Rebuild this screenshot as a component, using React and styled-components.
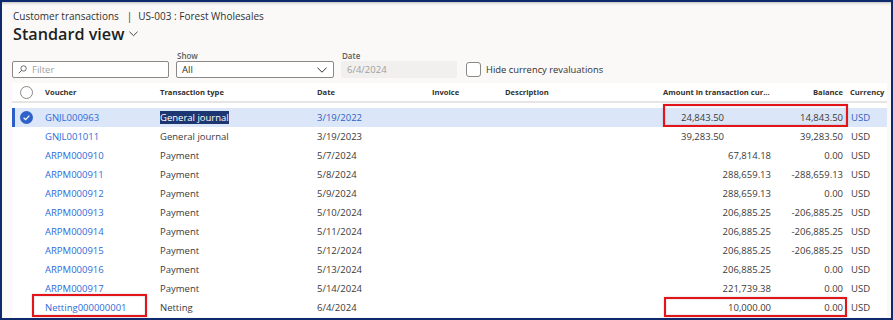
import React from 'react'
import styled, { createGlobalStyle } from 'styled-components'

const GlobalStyle = createGlobalStyle`
  body {
    margin: 0;
    background: #ffffff;
    font-family: "Open Sans", "Noto Sans", sans-serif;
  }
`

const Frame = styled.div`
  width: 893px;
  height: 320px;
  box-sizing: border-box;
  border: 2px solid #0e2a6c;
  background: #faf9f8;
  overflow: hidden;
  box-shadow: inset 0 3px 3px -2px rgba(0, 0, 0, 0.25);
  color: #323130;
`

const Head = styled.div`
  padding: 7px 0 0 11px;
`

const Crumb = styled.div`
  font-size: 10px;
  line-height: 14px;
  color: #323130;
  white-space: nowrap;
  span {
    margin: 0 6px 0 8px;
  }
`

const Title = styled.div`
  display: flex;
  align-items: center;
  gap: 5px;
  font-size: 16.2px;
  font-weight: 600;
  line-height: 22px;
  color: #201f1e;
`

const Controls = styled.div`
  display: flex;
  align-items: flex-end;
  margin: 6px 0 0 10px;
  height: 27px;
`

const FieldGroup = styled.div`
  display: flex;
  flex-direction: column;
  width: ${p => p.w}px;
  margin-right: ${p => p.mr}px;
`

const Label = styled.div`
  font-size: 8px;
  line-height: 10px;
  font-weight: 600;
  color: #605e5c;
  padding-left: 1px;
`

const Input = styled.div`
  box-sizing: border-box;
  height: 17px;
  display: flex;
  align-items: center;
  gap: 5px;
  padding: 0 6px 0 5px;
  font-size: 9.5px;
  border-radius: 2px;
  border: ${p => (p.disabled ? '1px solid #f0efee' : '1px solid #8a8886')};
  background: ${p => (p.disabled ? '#f1f0ef' : '#ffffff')};
  color: ${p => (p.muted ? '#a19f9d' : '#323130')};
  justify-content: ${p => (p.spread ? 'space-between' : 'flex-start')};
`

const Check = styled.label`
  display: flex;
  align-items: center;
  gap: 5px;
  height: 17px;
  font-size: 9.4px;
  color: #323130;
  white-space: nowrap;
  span.box {
    width: 13px;
    height: 13px;
    border: 1px solid #8a8886;
    border-radius: 3px;
    background: #fff;
  }
`

const Grid = styled.div`
  margin: 5px 0 0 10px;
  width: 875px;
  background: #ffffff;
`

const cols = '33px 115px 157px 115px 73px 158px 114px 72px 38px'

const HeaderRow = styled.div`
  display: grid;
  grid-template-columns: ${cols};
  height: 18px;
  align-items: center;
  font-size: 7.6px;
  font-weight: 700;
  color: #323130;
  white-space: nowrap;
  border-bottom: 2px solid #e6e5e4;
`

const HeadCell = styled.div`
  text-align: ${p => (p.right ? 'right' : 'left')};
  padding-right: ${p => p.pr || 0}px;
  padding-left: ${p => p.pl || 0}px;
  overflow: visible;
`

const Spacer = styled.div`
  height: 5px;
`

const Row = styled.div`
  position: relative;
  display: grid;
  grid-template-columns: ${cols};
  height: 19px;
  align-items: center;
  font-size: 9.5px;
  white-space: nowrap;
  background: ${p => (p.selected ? '#dbe6f8' : '#ffffff')};
  color: ${p => (p.selected ? '#2f62c4' : '#3b3a39')};
  box-shadow: ${p => (p.selected ? 'inset 3px 0 0 #2b5fc6' : 'none')};
`

const Cell = styled.div`
  text-align: ${p => (p.right ? 'right' : 'left')};
  padding-right: ${p => p.pr || 0}px;
  padding-left: ${p => p.pl || 0}px;
  overflow: hidden;
  text-overflow: ellipsis;
`

const Link = styled(Cell)`
  color: #2f6bd8;
`

const Amount = styled(Cell)`
  color: #3b3a39;
`

const Picked = styled.span`
  background: #1b3670;
  color: #ffffff;
  padding: 1px 0;
`

const RedBox = styled.div`
  position: absolute;
  box-sizing: border-box;
  border: 2px solid #e3151a;
  box-shadow: inset 0 0 2px rgba(0, 0, 0, 0.25), 0 0 2px rgba(0, 0, 0, 0.2);
  pointer-events: none;
  left: ${p => p.x}px;
  width: ${p => p.w}px;
  top: ${p => p.t}px;
  bottom: ${p => p.b}px;
`

const Circle = styled.span`
  display: block;
  width: 13px;
  height: 13px;
  margin-left: 8px;
  box-sizing: border-box;
  border-radius: 50%;
  border: ${p => (p.on ? 'none' : '1px solid #8a8886')};
  background: ${p => (p.on ? '#2f62c9' : '#fff')};
  position: relative;
`

const Chevron = ({ size = 9, color = '#605e5c' }) => (
  <svg width={size} height={size * 0.6} viewBox="0 0 10 6">
    <polyline points="0.5,0.8 5,5.2 9.5,0.8" fill="none" stroke={color} strokeWidth="1" />
  </svg>
)

const SearchIcon = () => (
  <svg width="9" height="9" viewBox="0 0 10 10">
    <circle cx="6.2" cy="3.8" r="3" fill="none" stroke="#605e5c" strokeWidth="1" />
    <line x1="4" y1="6" x2="0.8" y2="9.2" stroke="#605e5c" strokeWidth="1.1" />
  </svg>
)

const Tick = () => (
  <svg width="13" height="13" viewBox="0 0 13 13" style={{ position: 'absolute', left: 0, top: 0 }}>
    <polyline points="3.6,6.7 5.6,8.6 9.4,4.6" fill="none" stroke="#fff" strokeWidth="1.3" />
  </svg>
)

const rows = [
  { v: 'GNJL000963', t: 'General journal', d: '3/19/2022', a: '24,843.50', b: '14,843.50', early: true, selected: true, box: true },
  { v: 'GNJL001011', t: 'General journal', d: '3/19/2023', a: '39,283.50', b: '39,283.50', early: true },
  { v: 'ARPM000910', t: 'Payment', d: '5/7/2024', a: '67,814.18', b: '0.00' },
  { v: 'ARPM000911', t: 'Payment', d: '5/8/2024', a: '288,659.13', b: '-288,659.13' },
  { v: 'ARPM000912', t: 'Payment', d: '5/9/2024', a: '288,659.13', b: '0.00' },
  { v: 'ARPM000913', t: 'Payment', d: '5/10/2024', a: '206,885.25', b: '-206,885.25' },
  { v: 'ARPM000914', t: 'Payment', d: '5/11/2024', a: '206,885.25', b: '-206,885.25' },
  { v: 'ARPM000915', t: 'Payment', d: '5/12/2024', a: '206,885.25', b: '-206,885.25' },
  { v: 'ARPM000916', t: 'Payment', d: '5/13/2024', a: '206,885.25', b: '0.00' },
  { v: 'ARPM000917', t: 'Payment', d: '5/14/2024', a: '221,739.38', b: '0.00' },
  { v: 'Netting000000001', t: 'Netting', d: '6/4/2024', a: '10,000.00', b: '0.00', last: true },
]

const App = () => {
  return (
    <>
      <GlobalStyle />
      <Frame>
        <Head>
          <Crumb>
            Customer transactions<span>|</span>US-003 : Forest Wholesales
          </Crumb>
          <Title>
            Standard view
            <Chevron size={9} color="#323130" />
          </Title>
        </Head>

        <Controls>
          <FieldGroup w={157} mr={7}>
            <Input muted>
              <SearchIcon />
              Filter
            </Input>
          </FieldGroup>
          <FieldGroup w={158} mr={7}>
            <Label>Show</Label>
            <Input spread>
              All
              <Chevron size={10} color="#323130" />
            </Input>
          </FieldGroup>
          <FieldGroup w={116} mr={9}>
            <Label>Date</Label>
            <Input disabled muted>6/4/2024</Input>
          </FieldGroup>
          <Check>
            <span className="box" />
            Hide currency revaluations
          </Check>
        </Controls>

        <Grid>
          <HeaderRow>
            <HeadCell><Circle /></HeadCell>
            <HeadCell>Voucher</HeadCell>
            <HeadCell>Transaction type</HeadCell>
            <HeadCell>Date</HeadCell>
            <HeadCell>Invoice</HeadCell>
            <HeadCell>Description</HeadCell>
            <HeadCell>Amount in transaction cur...</HeadCell>
            <HeadCell right pr={6}>Balance</HeadCell>
            <HeadCell pl={1}>Currency</HeadCell>
          </HeaderRow>
          <Spacer />
          {rows.map(r => (
            <Row key={r.v} selected={r.selected}>
              <Cell>{r.selected && <Circle on><Tick /></Circle>}</Cell>
              <Link>{r.v}</Link>
              <Cell>{r.selected ? <Picked>{r.t}</Picked> : r.t}</Cell>
              <Cell>{r.d}</Cell>
              <Cell />
              <Cell />
              <Amount right pr={r.early ? 53 : 6}>{r.a}</Amount>
              <Amount right pr={6}>{r.b}</Amount>
              <Cell pl={2}>USD</Cell>
              {r.box && <RedBox x={651} w={185} t={-4} b={0} />}
              {r.last && <RedBox x={652} w={183} t={-1} b={0} />}
              {r.last && <RedBox x={20} w={115} t={-4} b={0} />}
            </Row>
          ))}
        </Grid>
      </Frame>
    </>
  )
}

export default App
